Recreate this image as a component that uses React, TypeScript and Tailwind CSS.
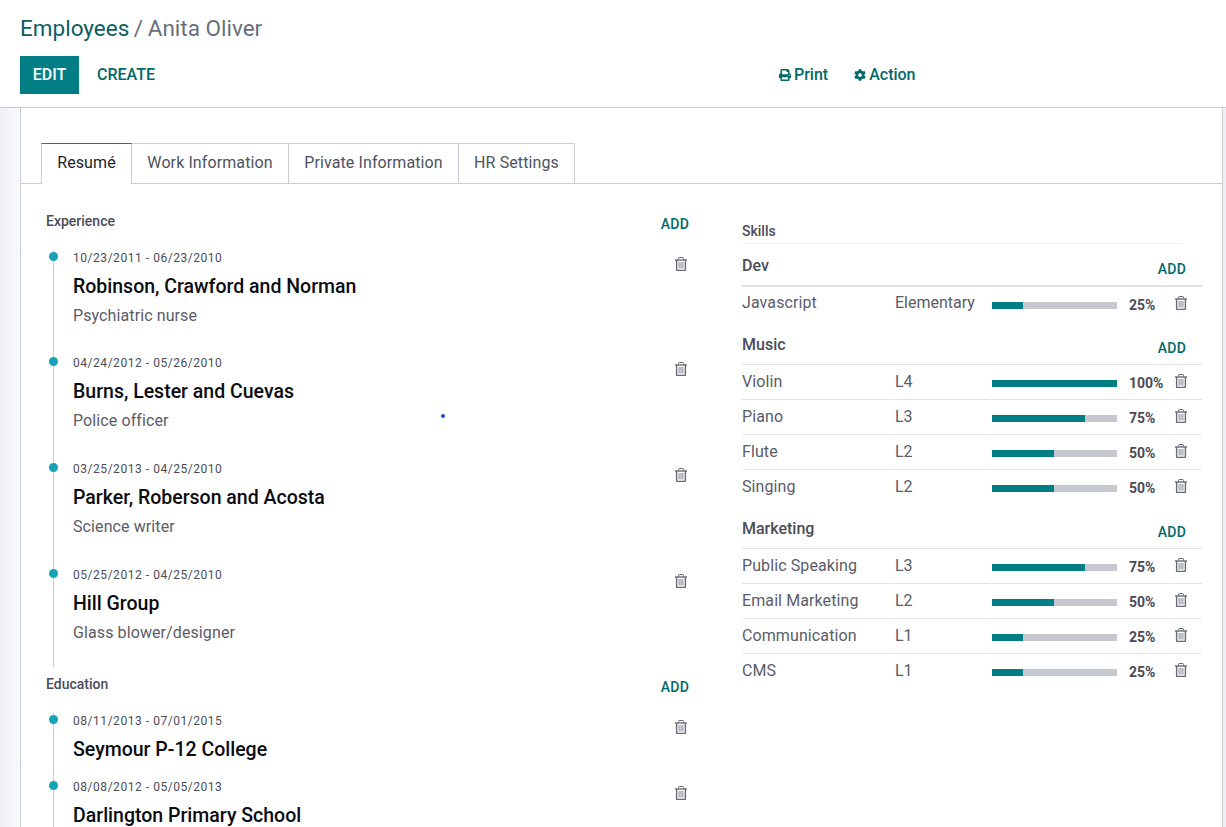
import { FaCog, FaPrint } from 'react-icons/fa';

const experience = [
  { dates: '10/23/2011 - 06/23/2010', name: 'Robinson, Crawford and Norman', role: 'Psychiatric nurse' },
  { dates: '04/24/2012 - 05/26/2010', name: 'Burns, Lester and Cuevas', role: 'Police officer' },
  { dates: '03/25/2013 - 04/25/2010', name: 'Parker, Roberson and Acosta', role: 'Science writer' },
  { dates: '05/25/2012 - 04/25/2010', name: 'Hill Group', role: 'Glass blower/designer' },
];

const education = [
  { dates: '08/11/2013 - 07/01/2015', name: 'Seymour P-12 College' },
  { dates: '08/08/2012 - 05/05/2013', name: 'Darlington Primary School' },
];

const skillGroups = [
  { name: 'Dev', skills: [{ name: 'Javascript', level: 'Elementary', pct: 25 }] },
  {
    name: 'Music',
    skills: [
      { name: 'Violin', level: 'L4', pct: 100 },
      { name: 'Piano', level: 'L3', pct: 75 },
      { name: 'Flute', level: 'L2', pct: 50 },
      { name: 'Singing', level: 'L2', pct: 50 },
    ],
  },
  {
    name: 'Marketing',
    skills: [
      { name: 'Public Speaking', level: 'L3', pct: 75 },
      { name: 'Email Marketing', level: 'L2', pct: 50 },
      { name: 'Communication', level: 'L1', pct: 25 },
      { name: 'CMS', level: 'L1', pct: 25 },
    ],
  },
];

// fa-trash-o style: lid with handle, walled body, three inner bars
function Trash() {
  return (
    <svg width="12" height="14" viewBox="0 0 12 14" fill="none" className="block text-[#666977]" stroke="currentColor">
      <path d="M3.5 2.5V1.2c0-.4.3-.7.7-.7h3.6c.4 0 .7.3.7.7v1.3" strokeWidth="1" />
      <path d="M0 3h12" strokeWidth="1.4" />
      <path d="M1.6 3v9.7c0 .4.3.8.8.8h7.2c.5 0 .8-.4.8-.8V3" strokeWidth="1.4" />
      <path d="M4.1 5v6.5M6 5v6.5M7.9 5v6.5" strokeWidth="1" opacity="0.8" />
    </svg>
  );
}

function AddLink() {
  return <span className="block text-[14px] font-medium leading-[14px] tracking-[0.2px] text-[#00696b]">ADD</span>;
}

function Entry({ dates, name, role, short }: { dates: string; name: string; role?: string; short?: boolean }) {
  const height = !role ? 'h-[66px]' : short ? 'h-[105px]' : 'h-[106px]';
  return (
    <div className={`relative flex justify-between ${height}`}>
      <span className="absolute left-0 top-[2px] h-[9px] w-[9px] rounded-full bg-[#17a2b8]" />
      <div className="pl-[24px] pt-[1px]">
        <p className="text-[12px] leading-[14px] tracking-[0.54px] text-[#4c4c55]">{dates}</p>
        <p className="mt-[7px] text-[19.5px] font-medium leading-[30px] text-[#0b0b12]">{name}</p>
        {role && <p className="mt-[4px] text-[16px] leading-[20px] tracking-[0.1px] text-[#5b5c68]">{role}</p>}
      </div>
      <span className="mr-[2px] mt-[7px]">
        <Trash />
      </span>
    </div>
  );
}

function SkillRow({ name, level, pct, last, first }: { name: string; level: string; pct: number; last: boolean; first: boolean }) {
  const cell = last ? '' : 'border-b border-[#e2e2e6]';
  const textTop = first ? 'pt-[5px]' : 'pt-[6px]';
  return (
    <div className="grid h-[35px] grid-cols-[151px_97px_177px_32px] gap-x-[1px] text-[16px] text-[#5b5c68]">
      <div className={`${cell} ${textTop} leading-[22px] tracking-[0.1px]`}>{name}</div>
      <div className={`${cell} ${textTop} pl-[1px] leading-[22px]`}>{level}</div>
      <div className={`${cell} flex items-start`}>
        <div className="mt-[15px] h-[7px] w-[125px] bg-[#c6c9d0]">
          <div className="h-full bg-[#017e84]" style={{ width: Math.floor((125 * pct) / 100) }} />
        </div>
        <span className="ml-[12px] mt-[11px] text-[14px] font-bold leading-[14px] text-[#4a4b57]">{pct}%</span>
      </div>
      <div className={`${cell} pl-[5px] pt-[9px]`}>
        <Trash />
      </div>
    </div>
  );
}

export default function App() {
  return (
    <div className="relative flex h-[827px] w-full flex-col overflow-hidden bg-white font-['Roboto',sans-serif]">
      {/* Control panel */}
      <header className="h-[108px] shrink-0 border-b border-[#c9ccd2] pl-[20px]">
        <h1 className="pt-[13px] text-[22.5px] leading-[30px] text-[#66707b]">
          <span className="mr-[-1px] text-[#0d5e60]">Employees</span> /<span className="ml-[-1px]"> Anita Oliver</span>
        </h1>
        <div className="mt-[13px] flex h-[38px] items-center text-[16px] font-medium">
          <button className="h-[38px] w-[59px] bg-[#017e84] text-white">EDIT</button>
          <button className="ml-[18px] text-[#00696b]">CREATE</button>
          <div className="ml-[624px] flex items-center gap-[26px] text-[#00696b]">
            <span className="flex items-center gap-[3px]">
              <FaPrint className="text-[12px]" /> Print
            </span>
            <span className="flex items-center gap-[3px]">
              <FaCog className="text-[12px]" /> Action
            </span>
          </div>
        </div>
      </header>

      <div className="flex min-h-0 flex-1">
        <div className="w-[21px] shrink-0 border-r border-[#c9ccd2] bg-gradient-to-r from-[#eef0f5] to-[#f8f9fb]" />

        <main className="min-w-0 flex-1 overflow-hidden border-r border-[#c9ccd2]">
          {/* Tabs */}
          <div className="mt-[35px] flex h-[41px] border-b border-[#c9ccd2] pl-[20px] text-[16px] tracking-[0.1px] text-[#4f5260]">
            <div className="relative flex h-[41px] w-[91px] items-center justify-center border-x border-t border-x-[#c9ccd2] border-t-[#6d5066] bg-white pb-[2px] text-[#1d1d26]">
              Resumé
            </div>
            <div className="flex h-[40px] w-[157px] items-center justify-center border-r border-t border-[#c9ccd2] pb-[2px]">Work Information</div>
            <div className="flex h-[40px] w-[170px] items-center justify-center border-r border-t border-[#c9ccd2] pb-[2px]">Private Information</div>
            <div className="flex h-[40px] w-[116px] items-center justify-center border-r border-t border-[#c9ccd2] pb-[2px]">HR Settings</div>
          </div>

          <div className="flex">
            {/* Resume column */}
            <section className="w-[721px] shrink-0 pl-[25px] pr-[53px]">
              <div className="flex justify-between pt-[30px]">
                <h2 className="text-[14px] font-medium leading-[14px] text-[#4b4c58]">Experience</h2>
                <span className="pt-[3px]"><AddLink /></span>
              </div>
              <div className="relative mt-[19px] pl-[3px]">
                <span className="absolute bottom-[6px] left-[7px] top-0 w-px bg-[#c9ccd2]" />
                {experience.map((e, i) => (
                  <Entry key={e.name} {...e} short={i === 0} />
                ))}
              </div>
              <div className="mt-[4px] flex justify-between">
                <h2 className="text-[14px] font-medium leading-[14px] text-[#4b4c58]">Education</h2>
                <span className="pt-[3px]"><AddLink /></span>
              </div>
              <div className="relative mt-[19px] pl-[3px]">
                <span className="absolute bottom-0 left-[7px] top-0 w-px bg-[#c9ccd2]" />
                {education.map((e) => (
                  <Entry key={e.name} {...e} />
                ))}
              </div>
            </section>

            {/* Skills column */}
            <section className="w-[460px] shrink-0">
              <h2 className="mt-[40px] w-[440px] border-b border-[#f0f0f2] pb-[5px] text-[14px] font-medium leading-[14px] text-[#4b4c58]">
                Skills
              </h2>
              {skillGroups.map((g, i) => (
                <div key={g.name} className={i === 2 ? 'mt-[1px]' : ''}>
                  <div className={`flex h-[43px] items-start justify-between pr-[16px] ${i === 0 ? 'border-b-2 border-[#e2e2e6]' : 'border-b border-[#e2e2e6]'}`}>
                    <span className={`${i === 0 ? 'pt-[11px]' : 'pt-[12px]'} text-[16px] font-medium leading-[22px] text-[#4b4c58]`}>{g.name}</span>
                    <span className={i === 0 ? 'pt-[18px]' : 'pt-[19px]'}><AddLink /></span>
                  </div>
                  {g.skills.map((s, j) => (
                    <SkillRow key={s.name} {...s} first={i === 0} last={j === g.skills.length - 1} />
                  ))}
                </div>
              ))}
            </section>
          </div>
        </main>

        <div className="w-[3px] shrink-0 bg-[#eef0f6]" />
      </div>

      {/* stray cursor dot in the capture */}
      <span className="absolute left-[441px] top-[414px] h-[4px] w-[4px] rounded-full bg-[#1d4ed8]" />
    </div>
  );
}
